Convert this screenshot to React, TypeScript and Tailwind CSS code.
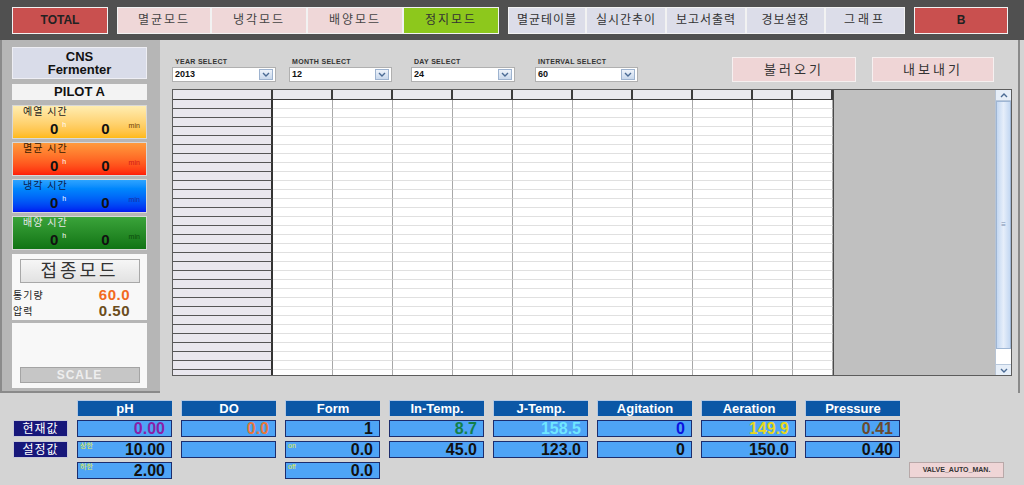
import React from 'react';

const FONT = "font-['Liberation_Sans','Noto_Sans_CJK_KR',sans-serif]";

const SHEET_COLS = ['w-[60px]', 'w-[60px]', 'w-[60px]', 'w-[60px]', 'w-[60px]', 'w-[60px]', 'w-[60px]', 'w-[60px]', 'w-[40px]', 'w-[40px]'];
const ROW_COUNT = 31;

const MEASURES = [
  { name: 'pH', now: '0.00', nowColor: 'text-[#8a1fa6]', set: '10.00', setTag: '상한', low: '2.00', lowTag: '하한' },
  { name: 'DO', now: '0.0', nowColor: 'text-[#e8773a]', set: '', setTag: '' },
  { name: 'Form', now: '1', nowColor: 'text-[#111]', set: '0.0', setTag: 'on', low: '0.0', lowTag: 'off' },
  { name: 'In-Temp.', now: '8.7', nowColor: 'text-[#12804a]', set: '45.0', setTag: '' },
  { name: 'J-Temp.', now: '158.5', nowColor: 'text-[#6fe6ff]', set: '123.0', setTag: '' },
  { name: 'Agitation', now: '0', nowColor: 'text-[#0a14e0]', set: '0', setTag: '' },
  { name: 'Aeration', now: '149.9', nowColor: 'text-[#e8d81a]', set: '150.0', setTag: '' },
  { name: 'Pressure', now: '0.41', nowColor: 'text-[#6b4a2c]', set: '0.40', setTag: '' },
];

function Chevron({ up = false }: { up?: boolean }) {
  return (
    <svg width="8" height="5" viewBox="0 0 8 5" className="block">
      <path d={up ? 'M1 4 L4 1 L7 4' : 'M1 1 L4 4 L7 1'} stroke="#4a6a94" strokeWidth="1.4" fill="none" />
    </svg>
  );
}

function TopButton({ label, className }: { label: string; className: string }) {
  return (
    <div className={`h-[27px] flex items-center justify-center border border-[#f2f2f2] text-[12px] ${className}`}>
      {label}
    </div>
  );
}

function TimeBox({ label, bg, labelColor, minColor }: { label: string; bg: string; labelColor: string; minColor: string }) {
  return (
    <div className={`h-[34px] border border-[#d8d8d8] ${bg}`}>
      <div className={`pl-[10px] text-[10px] leading-[12px] tracking-[1px] ${labelColor}`}>{label}</div>
      <div className="flex items-start pl-[37px] pt-[3px]">
        <span className="text-[15px] font-bold leading-[15px] text-[#111]">0</span>
        <span className="ml-[4px] text-[7px] leading-[8px] text-white">h</span>
        <span className="ml-[35px] text-[15px] font-bold leading-[15px] text-[#111]">0</span>
        <span className={`ml-[19px] mt-[1px] text-[7px] leading-[8px] ${minColor}`}>min</span>
      </div>
    </div>
  );
}

function SelectBox({ label, value, className }: { label: string; value: string; className: string }) {
  return (
    <div className={`flex flex-col ${className}`}>
      <div className="pl-[3px] text-[7px] font-bold leading-[8px] text-[#333] tracking-[0.3px]">{label}</div>
      <div className="mt-[1px] h-[15px] flex items-center bg-white border border-[#b0b0b0] pl-[2px] pr-[2px]">
        <span className="flex-1 text-[9px] font-bold text-[#111]">{value}</span>
        <div className="w-[14px] h-[11px] flex items-center justify-center bg-gradient-to-b from-[#eef3fa] to-[#c9d8ec] border border-[#9eb3cf]">
          <Chevron />
        </div>
      </div>
    </div>
  );
}

function ValueCell({ value, color, tag }: { value: string; color: string; tag?: string }) {
  return (
    <div className="relative h-[17px] bg-[#4ea4f6] border border-[#1c2d6e] flex items-center justify-end pr-[6px]">
      {tag ? <span className="absolute left-[2px] top-[0px] text-[7px] leading-[8px] text-[#e6f04a]">{tag}</span> : null}
      <span className={`text-[16px] font-bold leading-[16px] ${color}`}>{value}</span>
    </div>
  );
}

export default function App() {
  return (
    <div className={`w-[1024px] h-[485px] overflow-hidden bg-[#d4d4d4] ${FONT}`}>
      {/* top menu */}
      <div className="h-[40px] bg-[#505050] flex items-center pl-[12px]">
        <TopButton label="TOTAL" className="w-[96px] bg-[#c9504f] font-bold text-[#222] border-[#e4b4b4]" />
        <div className="ml-[9px] flex">
          <TopButton label="멸균모드" className="w-[94px] bg-[#efd7d8] text-[#444] tracking-[2px]" />
          <TopButton label="냉각모드" className="w-[96px] bg-[#efd7d8] text-[#444] tracking-[2px]" />
          <TopButton label="배양모드" className="w-[96px] bg-[#efd7d8] text-[#444] tracking-[2px]" />
          <TopButton label="정지모드" className="w-[96px] bg-[#8dc81c] text-[#333] tracking-[2px]" />
        </div>
        <div className="ml-[9px] flex">
          <TopButton label="멸균테이블" className="w-[78px] bg-[#dcdde9] text-[#333] tracking-[1px]" />
          <TopButton label="실시간추이" className="w-[80px] bg-[#dcdde9] text-[#333] tracking-[1px]" />
          <TopButton label="보고서출력" className="w-[80px] bg-[#dcdde9] text-[#333] tracking-[1px]" />
          <TopButton label="경보설정" className="w-[79px] bg-[#dcdde9] text-[#333] tracking-[1px]" />
          <TopButton label="그래프" className="w-[80px] bg-[#dcdde9] text-[#333] tracking-[3px]" />
        </div>
        <TopButton label="B" className="ml-[9px] w-[94px] bg-[#c9504f] font-bold text-[#222] border-[#e4b4b4]" />
      </div>

      <div className="flex h-[353px]">
        {/* left panel */}
        <div className="w-[160px] bg-[#b6b6b6] border-l-2 border-b-2 border-[#8a8a8a] pl-[10px] pt-[7px] flex flex-col">
          <div className="w-[135px] h-[32px] bg-[#d9dce9] border border-[#eeeef4] flex flex-col items-center justify-center text-[13px] font-bold leading-[13px] text-[#111]">
            <span>CNS</span>
            <span>Fermenter</span>
          </div>
          <div className="mt-[5px] w-[135px] h-[16px] bg-[#f3f3f3] flex items-center justify-center text-[13px] font-bold text-[#111]">
            PILOT A
          </div>
          <div className="mt-[5px] w-[135px] flex flex-col gap-[3px]">
            <TimeBox label="예열 시간" bg="bg-gradient-to-b from-[#ffedb0] to-[#ffba10]" labelColor="text-[#222]" minColor="text-[#6a3a00]" />
            <TimeBox label="멸균 시간" bg="bg-gradient-to-b from-[#ff9a3c] to-[#ff1a08]" labelColor="text-[#3a1a00]" minColor="text-[#d01818]" />
            <TimeBox label="냉각 시간" bg="bg-gradient-to-b from-[#2ca4ff] to-[#0414f0]" labelColor="text-[#0a1a4a]" minColor="text-[#1a2a9a]" />
            <TimeBox label="배양 시간" bg="bg-gradient-to-b from-[#3aa43a] to-[#107414]" labelColor="text-[#e8e8e8]" minColor="text-[#0a4a0a]" />
          </div>
          <div className="mt-[4px] w-[135px] h-[66px] bg-[#f8f8f8] pt-[5px]">
            <div className="mx-auto w-[120px] h-[24px] bg-gradient-to-b from-[#f6f6f6] to-[#e2e2e2] border border-[#a8a8a8] flex items-center justify-center text-[18px] leading-[18px] text-[#333] tracking-[3px]">
              접종모드
            </div>
            <div className="mt-[4px] flex items-center h-[16px] pl-[1px] pr-[17px]">
              <span className="text-[10px] text-[#222] tracking-[1px]">통기량</span>
              <span className="ml-auto text-[15px] font-bold text-[#f26a1e] tracking-[0.5px]">60.0</span>
            </div>
            <div className="flex items-center h-[16px] pl-[1px] pr-[17px]">
              <span className="text-[10px] text-[#222] tracking-[1px]">압력</span>
              <span className="ml-auto text-[15px] font-bold text-[#6b4d1c] tracking-[0.5px]">0.50</span>
            </div>
          </div>
          <div className="mt-[3px] w-[135px] h-[65px] bg-[#f8f8f8] flex flex-col justify-end pb-[5px]">
            <div className="mx-auto w-[120px] h-[16px] bg-[#c6c6c6] border border-[#a4a4a4] flex items-center justify-center text-[12px] font-bold text-[#eeeeee] tracking-[1px]">
              SCALE
            </div>
          </div>
        </div>

        {/* main area */}
        <div className="flex-1 flex flex-col pl-[12px] border-r-2 border-[#8a8a8a] mr-[4px]">
          <div className="h-[49px] flex items-end pb-[7px]">
            <SelectBox label="YEAR SELECT" value="2013" className="w-[104px]" />
            <SelectBox label="MONTH SELECT" value="12" className="ml-[13px] w-[103px]" />
            <SelectBox label="DAY SELECT" value="24" className="ml-[19px] w-[104px]" />
            <SelectBox label="INTERVAL SELECT" value="60" className="ml-[20px] w-[103px]" />
            <div className="ml-[94px] w-[124px] h-[25px] bg-[#efd5d6] border border-[#f6f0f0] flex items-center justify-center text-[13px] text-[#333] tracking-[3px]">
              불러오기
            </div>
            <div className="ml-[16px] w-[122px] h-[25px] bg-[#efd5d6] border border-[#f6f0f0] flex items-center justify-center text-[13px] text-[#333] tracking-[3px]">
              내보내기
            </div>
          </div>

          {/* data sheet */}
          <div className="w-[840px] h-[287px] flex border border-[#5c5c5c] overflow-hidden">
            <div className="w-[660px] flex flex-col">
              <div className="flex h-[10px] shrink-0">
                <div className="w-[100px] h-full bg-[#e9e8ee] border-b border-r-2 border-[#3c3c3c]" />
                {SHEET_COLS.map((w, i) => (
                  <div key={i} className={`${w} h-full bg-[#e9e9ee] border-b border-r-2 border-[#3c3c3c]`} />
                ))}
              </div>
              {Array.from({ length: ROW_COUNT }).map((_, r) => (
                <div key={r} className="flex h-[9px] shrink-0">
                  <div className="w-[100px] h-full bg-[#e9e7ee] border-b border-b-[#555] border-r-2 border-r-[#333]" />
                  {SHEET_COLS.map((w, i) => (
                    <div key={i} className={`${w} h-full bg-white border-b border-b-[#e0e0e0] border-r border-r-[#a8a8a8]`} />
                  ))}
                </div>
              ))}
            </div>
            <div className="flex-1 bg-[#c0c0c0] border-l border-[#4a4a4a]" />
            <div className="w-[16px] flex flex-col bg-[#f6f8fc] border-l border-[#b8c4d4]">
              <div className="h-[11px] flex items-center justify-center bg-[#e6eef8] border-b border-[#b8c8dc]">
                <Chevron up />
              </div>
              <div className="h-[248px] bg-gradient-to-r from-[#c4d8f2] via-[#e6eefa] to-[#c4d8f2] border border-[#9fb6d4] flex items-center justify-center">
                <span className="text-[8px] leading-[8px] text-[#7a90b0]">≡</span>
              </div>
              <div className="flex-1 bg-white" />
              <div className="h-[11px] flex items-center justify-center bg-[#e6eef8] border-t border-[#b8c8dc]">
                <Chevron />
              </div>
            </div>
          </div>
        </div>
      </div>

      {/* bottom measurement panel */}
      <div className="h-[92px] pt-[7px] pl-[13px]">
        <div className="grid grid-cols-[55px_repeat(9,95px)] gap-x-[9px] gap-y-[4px]">
          <div />
          {MEASURES.map((m) => (
            <div key={m.name} className="h-[16px] bg-[#0b57a6] border-t border-l border-[#b4c8e2] flex items-center justify-center text-[13px] font-bold text-white">
              {m.name}
            </div>
          ))}
          <div />

          <div className="h-[17px] bg-[#17177a] border border-[#c8c8d8] flex items-center justify-center text-[12px] text-white tracking-[1px]">
            현재값
          </div>
          {MEASURES.map((m) => (
            <ValueCell key={m.name} value={m.now} color={m.nowColor} />
          ))}
          <div />

          <div className="h-[17px] bg-[#17177a] border border-[#c8c8d8] flex items-center justify-center text-[12px] text-white tracking-[1px]">
            설정값
          </div>
          {MEASURES.map((m) => (
            <ValueCell key={m.name} value={m.set} color="text-[#111]" tag={m.setTag} />
          ))}
          <div />

          <div />
          {MEASURES.map((m) =>
            m.low !== undefined ? (
              <ValueCell key={m.name} value={m.low} color="text-[#111]" tag={m.lowTag} />
            ) : (
              <div key={m.name} />
            )
          )}
          <div className="h-[16px] w-[95px] bg-[#efd5d6] border border-[#b8a8a8] flex items-center justify-center text-[7px] font-bold text-[#333]">
            VALVE_AUTO_MAN.
          </div>
        </div>
      </div>
    </div>
  );
}
